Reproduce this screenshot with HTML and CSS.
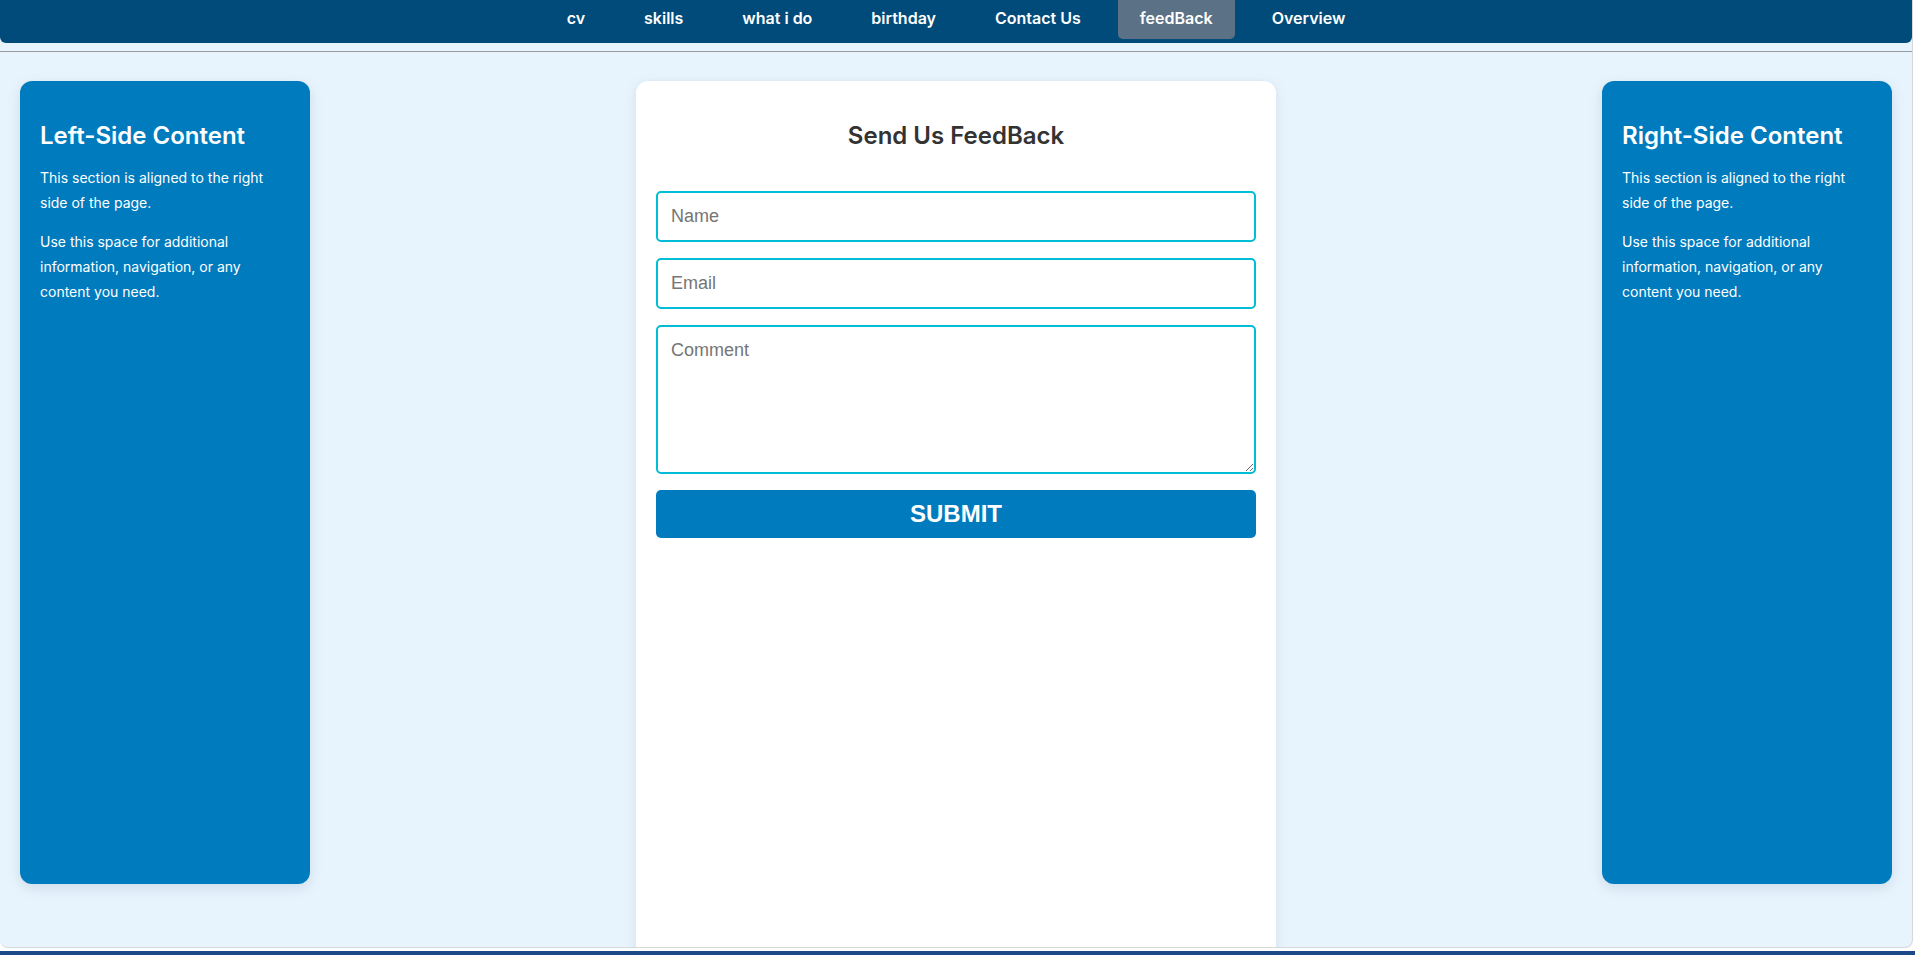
FILE: index.html
```html
<!DOCTYPE html>
<html lang="en">
<head>
<meta charset="utf-8">
<title>Send Us FeedBack</title>
<link rel="stylesheet" href="styles.css">
</head>
<body>
<div class="window">
  <nav class="topbar">
    <a class="nav-item" href="#">cv</a>
    <a class="nav-item" href="#">skills</a>
    <a class="nav-item" href="#">what i do</a>
    <a class="nav-item" href="#">birthday</a>
    <a class="nav-item" href="#">Contact Us</a>
    <a class="nav-item active" href="#">feedBack</a>
    <a class="nav-item" href="#">Overview</a>
  </nav>
  <hr class="divider">
  <main class="layout">
    <aside class="side-panel">
      <h2 class="side-title">Left-Side Content</h2>
      <p class="side-text">This section is aligned to the right side of the page.</p>
      <p class="side-text">Use this space for additional information, navigation, or any content you need.</p>
    </aside>
    <section class="card">
      <h2 class="card-title">Send Us FeedBack</h2>
      <form class="form">
        <input class="field" type="text" placeholder="Name">
        <input class="field" type="email" placeholder="Email">
        <textarea class="field field-area" placeholder="Comment"></textarea>
        <button class="submit" type="button">SUBMIT</button>
      </form>
    </section>
    <aside class="side-panel">
      <h2 class="side-title">Right-Side Content</h2>
      <p class="side-text">This section is aligned to the right side of the page.</p>
      <p class="side-text">Use this space for additional information, navigation, or any content you need.</p>
    </aside>
  </main>
</div>
<div class="taskbar"></div>
</body>
</html>
```

FILE: styles.css
```css
* { box-sizing: border-box; }

html, body {
  margin: 0;
  padding: 0;
  background: #ffffff;
  overflow: hidden;
}

body {
  font-family: Inter, "Noto Sans", sans-serif;
  width: 1915px;
  height: 955px;
}

.window {
  width: 1913px;
  height: 948px;
  background: #e8f4fd;
  border-right: 1px solid #d4d8dc;
  border-bottom: 1px solid #d4d8dc;
  border-radius: 0 0 8px 8px;
  overflow: hidden;
}

.topbar {
  height: 43px;
  background: #004b7a;
  border-radius: 0 0 6px 6px;
  display: flex;
  justify-content: center;
  align-items: flex-start;
  gap: 15px;
}

.nav-item {
  display: block;
  height: 39px;
  line-height: 37px;
  padding: 0 22px;
  color: #ffffff;
  font-weight: 600;
  font-size: 16px;
  text-decoration: none;
  border-radius: 0 0 5px 5px;
}

.nav-item.active {
  background: #5b7286;
}

.divider {
  margin: 8px 0 0;
  height: 0;
  border: 0;
  border-top: 1px solid #9c9c9c;
}

.layout {
  display: flex;
  justify-content: space-between;
  align-items: flex-start;
  padding: 29px 20px 0;
}

.side-panel {
  width: 290px;
  height: 803px;
  background: #007bbd;
  color: #ffffff;
  border-radius: 12px;
  padding: 20px;
  box-shadow: 0 4px 14px rgba(0, 60, 110, 0.12);
}

.side-title {
  margin: 20px 0 15px;
  font-size: 24px;
  line-height: 29px;
  font-weight: 600;
}

.side-text {
  margin: 0 0 14px;
  font-size: 14px;
  line-height: 25px;
}

.card {
  width: 640px;
  height: 900px;
  background: #ffffff;
  border-radius: 12px;
  padding: 20px;
  box-shadow: 0 2px 12px rgba(0, 60, 110, 0.1);
}

.card-title {
  margin: 20px 0 41px;
  text-align: center;
  font-size: 24px;
  line-height: 29px;
  font-weight: 600;
  color: #333333;
}

.form {
  display: flex;
  flex-direction: column;
  gap: 16px;
}

.field {
  display: block;
  width: 100%;
  height: 51px;
  padding: 13px;
  border: 2px solid #00bcd4;
  border-radius: 5px;
  font-family: "Liberation Sans", Arial, sans-serif;
  font-size: 18px;
  color: #333333;
  background: #ffffff;
  outline: none;
}

.field::placeholder {
  color: #757575;
}

.field-area {
  height: 149px;
  resize: vertical;
}

.submit {
  display: block;
  width: 100%;
  height: 48px;
  border: 0;
  border-radius: 5px;
  background: #007bbd;
  color: #ffffff;
  font-family: "Liberation Sans", Arial, sans-serif;
  font-weight: 700;
  font-size: 24px;
  cursor: pointer;
}

.taskbar {
  margin-top: 3px;
  height: 4px;
  background: #1c4a86;
}
```
